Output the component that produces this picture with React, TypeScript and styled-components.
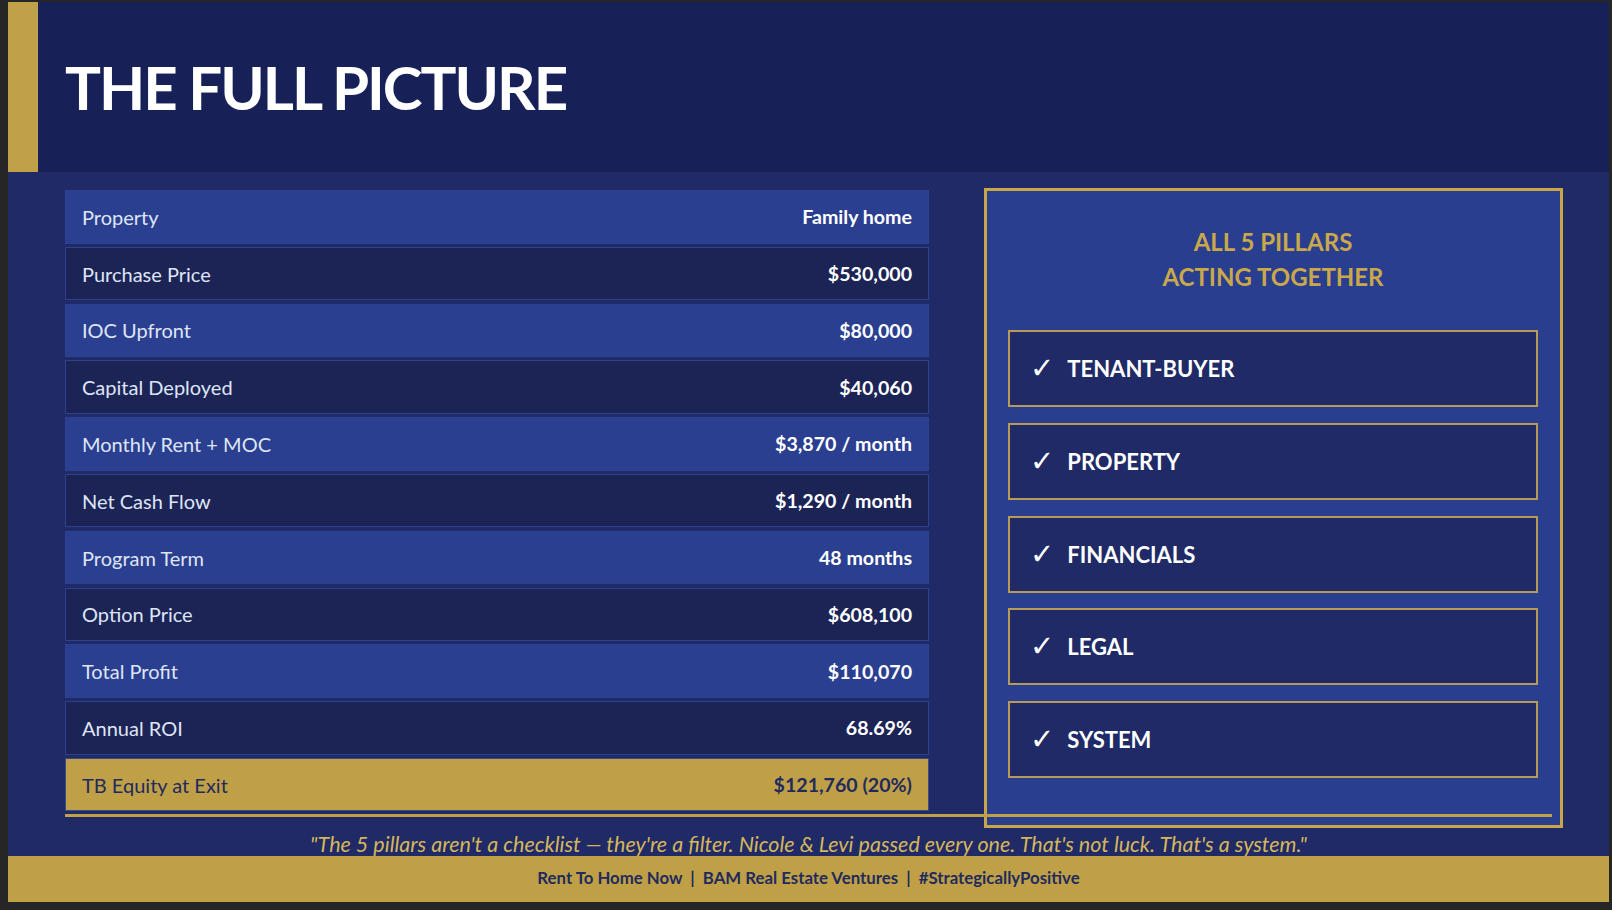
import React from "react";
import styled, { createGlobalStyle } from "styled-components";

const Global = createGlobalStyle`
  html, body { margin: 0; padding: 0; background: #262626; }
  body { font-family: Lato, "Open Sans", sans-serif; }
  * { box-sizing: border-box; }
`;

const Frame = styled.div`
  width: 1612px;
  height: 910px;
  padding: 2px 0 0 8px;
  background: #262626;
`;

const Slide = styled.div`
  width: 1601px;
  height: 900px;
  display: flex;
  flex-direction: column;
  background: #1f2a66;
`;

const Header = styled.header`
  height: 170px;
  display: flex;
  align-items: center;
  background: #172057;
`;

const GoldBar = styled.div`
  width: 30px;
  align-self: stretch;
  background: #c0a048;
`;

const Title = styled.h1`
  margin: 0 0 0 27px;
  color: #ffffff;
  font-family: Lato, sans-serif;
  font-weight: 700;
  font-size: 60px;
  letter-spacing: -2px;
`;

const Main = styled.main`
  position: relative;
  height: 660px;
  padding: 16px 38px 4px 57px;
  display: grid;
  grid-template-columns: 864px 579px;
  column-gap: 55px;
  align-items: start;
`;

const Table = styled.div`
  margin-top: 2px;
  display: flex;
  flex-direction: column;
  gap: 3.3px;
`;

const Row = styled.div<{ $tone: "light" | "dark" | "gold" }>`
  height: 53.5px;
  display: flex;
  align-items: center;
  justify-content: space-between;
  padding: 0 16px;
  background: ${(p) =>
    p.$tone === "light" ? "#2b3f91" : p.$tone === "dark" ? "#1c2456" : "#bfa046"};
  border: 1.5px solid
    ${(p) => (p.$tone === "gold" ? "#3a4a82" : "#2d4192")};
  color: ${(p) => (p.$tone === "gold" ? "#1f2a5e" : "#dfe5f5")};
`;

const Label = styled.span`
  font-size: 20px;
  font-weight: 400;
`;

const Value = styled.span<{ $gold?: boolean }>`
  font-size: 19.6px;
  font-weight: 700;
  color: ${(p) => (p.$gold ? "#1f2a5e" : "#ffffff")};
`;

const Underline = styled.div`
  position: absolute;
  left: 57px;
  top: 642px;
  width: 1487px;
  height: 3px;
  background: #c0a048;
`;

const Panel = styled.section`
  height: 640px;
  border: 3px solid #c9a64a;
  background: #2a3e8f;
  padding: 33px 22px 0 21px;
  display: flex;
  flex-direction: column;
`;

const PanelTitle = styled.h2`
  margin: 0 0 36px;
  text-align: center;
  color: #c9a84c;
  font-size: 24px;
  font-weight: 700;
  line-height: 35px;
`;

const Pillars = styled.div`
  display: flex;
  flex-direction: column;
  gap: 15.8px;
`;

const Pillar = styled.div`
  height: 77px;
  display: flex;
  align-items: center;
  gap: 13px;
  padding-left: 20px;
  border: 2px solid #b89a58;
  background: #1f2a66;
  color: #ffffff;
  font-size: 22px;
  font-weight: 700;
`;

const Check = styled.span`
  font-family: "DejaVu Sans", sans-serif;
  font-size: 29px;
  line-height: 1;
  font-weight: 700;
`;

const Quote = styled.p`
  margin: 0;
  height: 24px;
  line-height: 24px;
  text-align: center;
  color: #d6b65a;
  font-style: italic;
  font-size: 21.5px;
`;

const Footer = styled.footer`
  height: 46px;
  display: flex;
  align-items: center;
  justify-content: center;
  padding-bottom: 3px;
  background: #bfa046;
  color: #1f2a5e;
  font-size: 16.8px;
  font-weight: 700;
  white-space: pre;
`;

const rows: { label: string; value: string; tone: "light" | "dark" | "gold" }[] = [
  { label: "Property", value: "Family home", tone: "light" },
  { label: "Purchase Price", value: "$530,000", tone: "dark" },
  { label: "IOC Upfront", value: "$80,000", tone: "light" },
  { label: "Capital Deployed", value: "$40,060", tone: "dark" },
  { label: "Monthly Rent + MOC", value: "$3,870 / month", tone: "light" },
  { label: "Net Cash Flow", value: "$1,290 / month", tone: "dark" },
  { label: "Program Term", value: "48 months", tone: "light" },
  { label: "Option Price", value: "$608,100", tone: "dark" },
  { label: "Total Profit", value: "$110,070", tone: "light" },
  { label: "Annual ROI", value: "68.69%", tone: "dark" },
  { label: "TB Equity at Exit", value: "$121,760 (20%)", tone: "gold" },
];

const pillars = ["TENANT-BUYER", "PROPERTY", "FINANCIALS", "LEGAL", "SYSTEM"];

export default function App() {
  return (
    <Frame>
      <Global />
      <Slide>
        <Header>
          <GoldBar />
          <Title>THE FULL PICTURE</Title>
        </Header>
        <Main>
          <Table>
            {rows.map((r) => (
              <Row key={r.label} $tone={r.tone}>
                <Label>{r.label}</Label>
                <Value $gold={r.tone === "gold"}>{r.value}</Value>
              </Row>
            ))}
          </Table>
          <Panel>
            <PanelTitle>
              ALL 5 PILLARS
              <br />
              ACTING TOGETHER
            </PanelTitle>
            <Pillars>
              {pillars.map((p) => (
                <Pillar key={p}>
                  <Check>✓</Check>
                  {p}
                </Pillar>
              ))}
            </Pillars>
          </Panel>
          <Underline />
        </Main>
        <Quote>
          "The 5 pillars aren't a checklist — they're a filter. Nicole &amp; Levi passed every one. That's not luck. That's a system."
        </Quote>
        <Footer>{"Rent To Home Now  |  BAM Real Estate Ventures  |  #StrategicallyPositive"}</Footer>
      </Slide>
    </Frame>
  );
}
